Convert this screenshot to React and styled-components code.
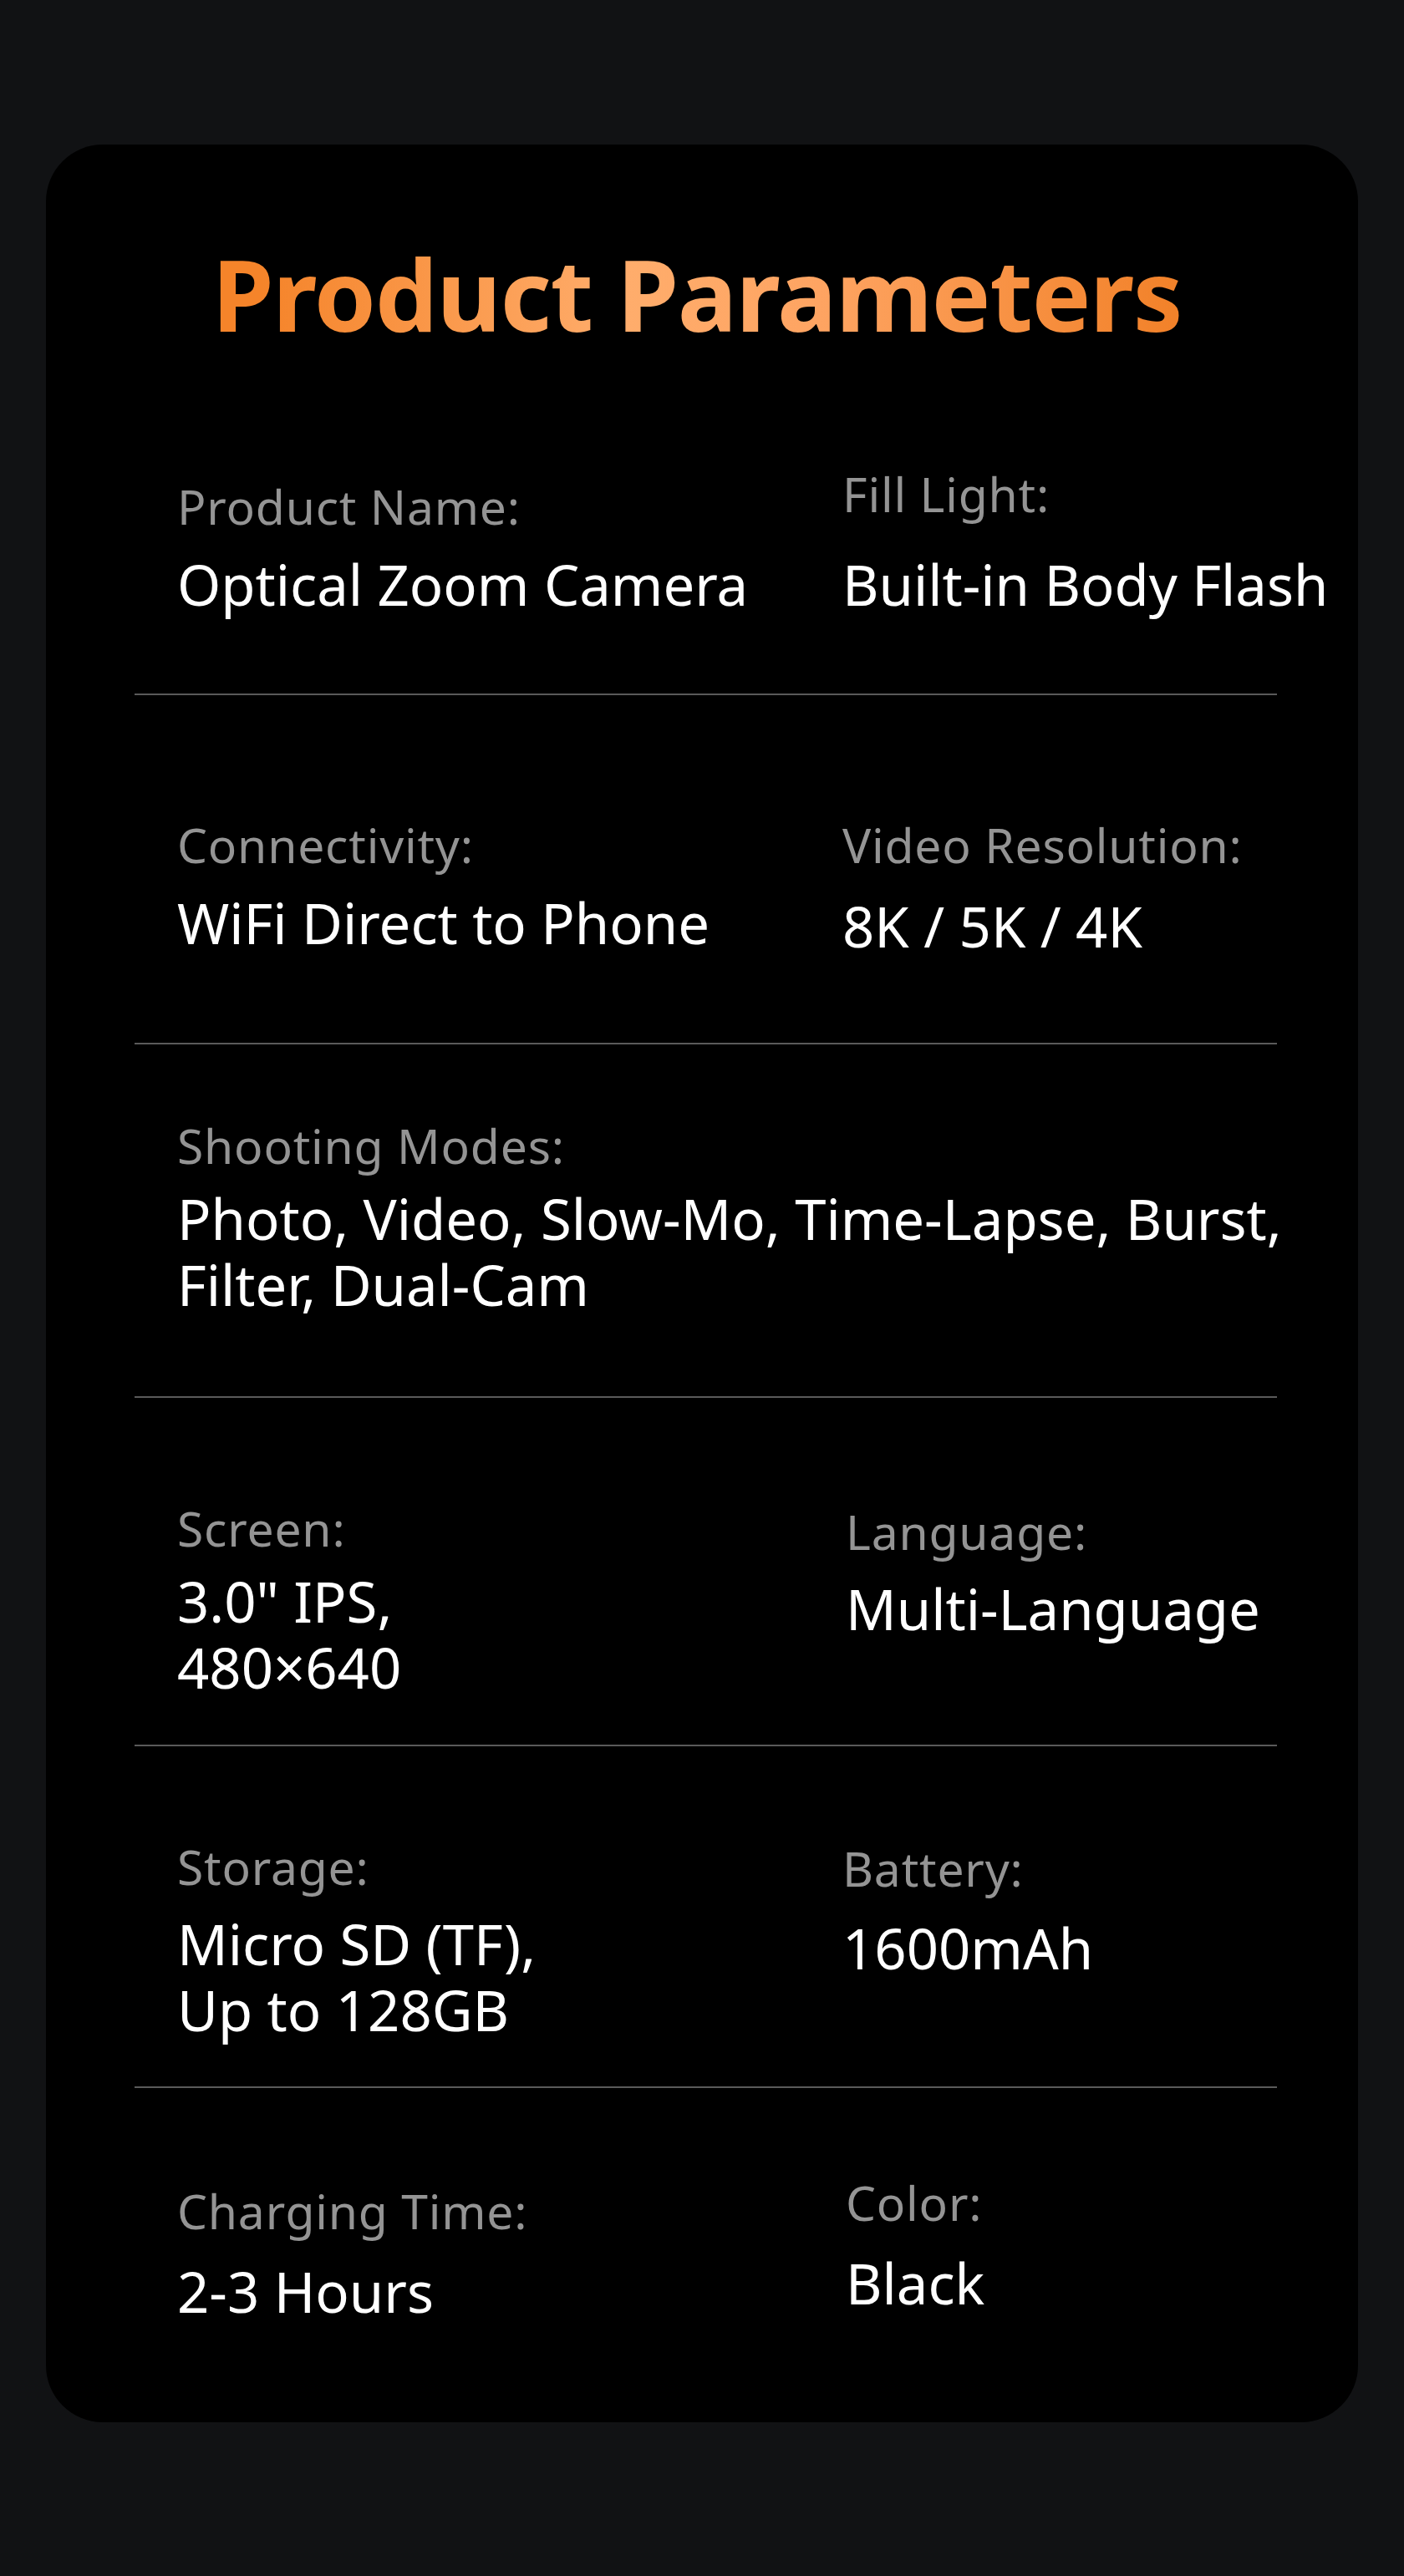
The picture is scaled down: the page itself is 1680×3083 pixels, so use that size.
import React from "react"
import styled, { createGlobalStyle } from "styled-components"

const GlobalStyle = createGlobalStyle`
  html, body {
    margin: 0;
    padding: 0;
    background: #111214;
  }
  body {
    font-family: "Noto Sans", "Open Sans", sans-serif;
    min-height: 3083px;
  }
`

const Page = styled.div`
  padding: 173px 55px 184px;
`

const Card = styled.section`
  width: 1570px;
  height: 2726px;
  box-sizing: border-box;
  background: #000;
  border-radius: 68px;
  padding-top: 107px;
  overflow: hidden;
`

const Title = styled.h1`
  margin: 0 auto;
  width: fit-content;
  padding-right: 12px;
  font-size: 119px;
  line-height: 143px;
  font-weight: 700;
  letter-spacing: -1.4px;
  background: linear-gradient(
    90deg,
    #f5842a 5%,
    #ffad6c 42%,
    #fea462 62%,
    #f2822a 98%
  );
  -webkit-background-clip: text;
  background-clip: text;
  color: transparent;
`

const Table = styled.div`
  margin: 0 97px 0 106px;
`

const Row = styled.div`
  display: grid;
  grid-template-columns: ${(p) => (p.$wide ? "1fr" : "847px 1fr")};
  height: ${(p) => p.$h}px;
  box-sizing: border-box;
  border-bottom: ${(p) => (p.$last ? "none" : "2px solid #5a5a5a")};
`

const Cell = styled.div`
  padding-top: ${(p) => p.$top}px;
  padding-left: ${(p) => p.$left}px;
  white-space: nowrap;
`

const Label = styled.div`
  font-size: 57px;
  line-height: 66px;
  letter-spacing: 0.8px;
  color: #949494;
  margin-bottom: ${(p) => p.$gap}px;
`

const Value = styled.div`
  font-size: 67px;
  line-height: 79px;
  color: #fff;
`

const rows = [
  {
    h: 409,
    cells: [
      { label: "Product Name:", value: ["Optical Zoom Camera"], top: 150, gap: 21, left: 51 },
      { label: "Fill Light:", value: ["Built-in Body Flash"], top: 135, gap: 36, left: 0 },
    ],
  },
  {
    h: 418,
    cells: [
      { label: "Connectivity:", value: ["WiFi Direct to Phone"], top: 146, gap: 21, left: 51 },
      { label: "Video Resolution:", value: ["8K / 5K / 4K"], top: 146, gap: 25, left: -4 },
    ],
  },
  {
    h: 423,
    wide: true,
    cells: [
      {
        label: "Shooting Modes:",
        value: ["Photo, Video, Slow-Mo, Time-Lapse, Burst,", "Filter, Dual-Cam"],
        top: 88,
        gap: 15,
        left: 51,
      },
    ],
  },
  {
    h: 417,
    cells: [
      { label: "Screen:", value: ['3.0" IPS,', "480×640"], top: 123, gap: 15, left: 51 },
      { label: "Language:", value: ["Multi-Language"], top: 127, gap: 20, left: 4 },
    ],
  },
  {
    h: 409,
    cells: [
      { label: "Storage:", value: ["Micro SD (TF),", "Up to 128GB"], top: 111, gap: 20, left: 51 },
      { label: "Battery:", value: ["1600mAh"], top: 113, gap: 23, left: -2 },
    ],
  },
  {
    h: 400,
    last: true,
    cells: [
      { label: "Charging Time:", value: ["2-3 Hours"], top: 114, gap: 24, left: 51 },
      { label: "Color:", value: ["Black"], top: 104, gap: 24, left: 4 },
    ],
  },
]

export default function App() {
  return (
    <>
      <GlobalStyle />
      <Page>
        <Card>
          <Title>Product Parameters</Title>
          <Table>
            {rows.map((row, i) => (
              <Row key={i} $h={row.h} $wide={row.wide} $last={row.last}>
                {row.cells.map((cell) => (
                  <Cell key={cell.label} $top={cell.top} $left={cell.left}>
                    <Label $gap={cell.gap}>{cell.label}</Label>
                    <Value>
                      {cell.value.map((line, j) => (
                        <React.Fragment key={line}>
                          {j > 0 && <br />}
                          {line}
                        </React.Fragment>
                      ))}
                    </Value>
                  </Cell>
                ))}
              </Row>
            ))}
          </Table>
        </Card>
      </Page>
    </>
  )
}
